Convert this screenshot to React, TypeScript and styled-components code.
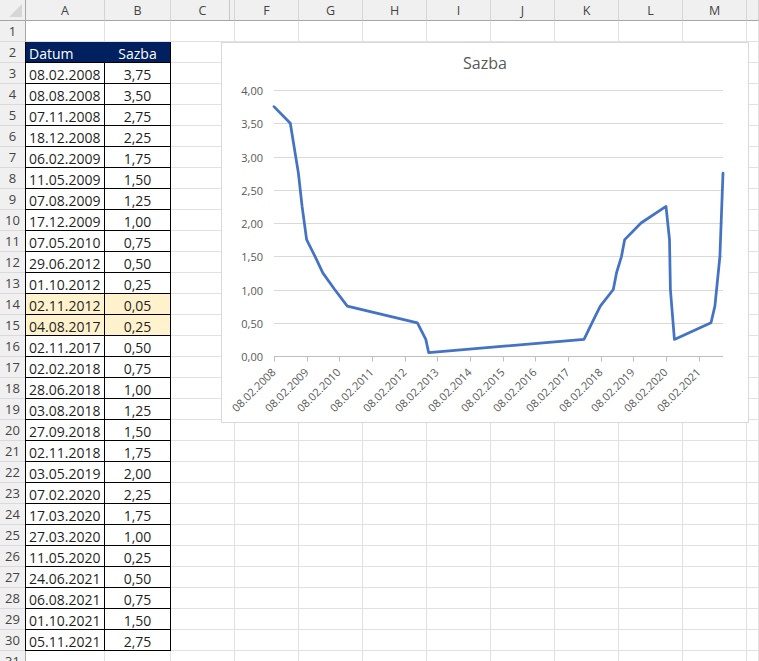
import React from "react";
import styled, { createGlobalStyle } from "styled-components";

const GlobalStyle = createGlobalStyle`
  html, body {
    margin: 0;
    padding: 0;
    background: #ffffff;
  }
  body {
    font-family: "Open Sans", "Liberation Sans", sans-serif;
    height: 661px;
    overflow: hidden;
  }
`;

const data: [string, number][] = [
  ["08.02.2008", 3.75],
  ["08.08.2008", 3.5],
  ["07.11.2008", 2.75],
  ["18.12.2008", 2.25],
  ["06.02.2009", 1.75],
  ["11.05.2009", 1.5],
  ["07.08.2009", 1.25],
  ["17.12.2009", 1.0],
  ["07.05.2010", 0.75],
  ["29.06.2012", 0.5],
  ["01.10.2012", 0.25],
  ["02.11.2012", 0.05],
  ["04.08.2017", 0.25],
  ["02.11.2017", 0.5],
  ["02.02.2018", 0.75],
  ["28.06.2018", 1.0],
  ["03.08.2018", 1.25],
  ["27.09.2018", 1.5],
  ["02.11.2018", 1.75],
  ["03.05.2019", 2.0],
  ["07.02.2020", 2.25],
  ["17.03.2020", 1.75],
  ["27.03.2020", 1.0],
  ["11.05.2020", 0.25],
  ["24.06.2021", 0.5],
  ["06.08.2021", 0.75],
  ["01.10.2021", 1.5],
  ["05.11.2021", 2.75],
];

// rows 14 and 15 are marked in the sheet
const highlighted = ["02.11.2012", "04.08.2017"];

// last column is only a sliver, its letter is off screen
const colLetters = ["A", "B", "C", "F", "G", "H", "I", "J", "K", "L", "M", ""];
const ROW_COUNT = 31;

const fmt = (v: number) => v.toFixed(2).replace(".", ",");

function parseDate(s: string) {
  const [d, m, y] = s.split(".").map(Number);
  return Date.UTC(y, m - 1, d);
}

/* ---------- sheet ---------- */

const Sheet = styled.div`
  position: relative;
  display: grid;
  grid-template-columns: 26px 79px 66px repeat(9, 64px) 1fr;
  grid-auto-rows: 21px;
  width: 100vw;
  height: 661px;
  overflow: hidden;
  color: #222222;
`;

const Corner = styled.div`
  position: relative;
  background: #f0f0f0;
  border-right: 1px solid #a6a6a6;
  border-bottom: 1px solid #a6a6a6;
  box-sizing: border-box;

  &::after {
    content: "";
    position: absolute;
    right: 3px;
    bottom: 3px;
    width: 0;
    height: 0;
    border-left: 13px solid transparent;
    border-bottom: 13px solid #d6d6d6;
  }
`;

const ColHeader = styled.div<{ $hiddenAfter?: boolean }>`
  display: flex;
  align-items: center;
  justify-content: center;
  background: #f0f0f0;
  border-right: 1px solid #d4d4d4;
  border-bottom: 1px solid #a6a6a6;
  box-sizing: border-box;
  font-size: 12.5px;
  color: #444444;
  box-shadow: ${(p) => (p.$hiddenAfter ? "inset -4px 0 0 #f0f0f0, inset -5px 0 0 #c8c8c8" : "none")};
`;

const RowHeader = styled.div`
  display: flex;
  align-items: center;
  justify-content: center;
  background: #f0f0f0;
  border-right: 1px solid #a6a6a6;
  border-bottom: 1px solid #dadada;
  box-sizing: border-box;
  font-size: 13px;
  color: #444444;
`;

type Tone = "plain" | "navy" | "marked";

const Cell = styled.div<{ $tone?: Tone; $boxed?: boolean; $center?: boolean; $first?: boolean }>`
  box-sizing: border-box;
  overflow: hidden;
  white-space: nowrap;
  padding: 0 3px;
  font-size: 14px;
  line-height: 23px;
  text-align: ${(p) => (p.$center ? "center" : "left")};
  background: ${(p) => (p.$tone === "navy" ? "#002060" : p.$tone === "marked" ? "#fff2cc" : "#ffffff")};
  color: ${(p) => (p.$tone === "navy" ? "#ffffff" : "#1f1f1f")};
  border-right: 1px solid
    ${(p) => (p.$boxed ? (p.$tone === "navy" && p.$first ? "#002060" : "#000000") : "#e1e1e1")};
  border-bottom: 1px solid ${(p) => (p.$boxed ? "#000000" : "#e1e1e1")};
  box-shadow: ${(p) => (p.$boxed && p.$first ? "-1px 0 0 #000000" : "none")};
`;

/* ---------- chart ---------- */

const ChartBox = styled.div`
  position: absolute;
  left: 221px;
  top: 42px;
  width: 528px;
  height: 381px;
  box-sizing: border-box;
  display: flex;
  flex-direction: column;
  background: #ffffff;
  border: 1px solid #d9d9d9;
`;

const ChartTitle = styled.div`
  box-sizing: border-box;
  height: 34px;
  padding-top: 10px;
  line-height: 20px;
  text-align: center;
  font-size: 16px;
  color: #595959;
`;

const PlotSvg = styled.svg`
  display: block;
  font-family: "Open Sans", "Liberation Sans", sans-serif;
  font-size: 11px;
`;

const PLOT_W = 526;
const PLOT_H = 345;
const LEFT = 52;
const RIGHT = 501;
const ZERO_Y = 279;
const UNIT = 66.5;

function RateChart() {
  const t0 = parseDate(data[0][0]);
  const t1 = parseDate(data[data.length - 1][0]);
  const xOf = (t: number) => LEFT + ((t - t0) / (t1 - t0)) * (RIGHT - LEFT);
  const yOf = (v: number) => ZERO_Y - v * UNIT;

  const points = data.map(([d, v]) => `${xOf(parseDate(d)).toFixed(1)},${yOf(v).toFixed(1)}`).join(" ");
  const levels = [0, 0.5, 1, 1.5, 2, 2.5, 3, 3.5, 4];
  const years = Array.from({ length: 14 }, (_, i) => 2008 + i);

  return (
    <ChartBox>
      <ChartTitle>Sazba</ChartTitle>
      <PlotSvg width={PLOT_W} height={PLOT_H} viewBox={`0 0 ${PLOT_W} ${PLOT_H}`}>
        {levels.map((v) => {
          const y = Math.round(yOf(v)) + 0.5;
          return (
            <g key={v}>
              <line x1={LEFT} x2={RIGHT} y1={y} y2={y} stroke={v === 0 ? "#bfbfbf" : "#d9d9d9"} strokeWidth={1} />
              <text x={41} y={y + 4} textAnchor="end" fill="#595959">
                {fmt(v)}
              </text>
            </g>
          );
        })}
        {years.map((yr) => {
          const x = Math.round(xOf(Date.UTC(yr, 1, 8))) + 0.5;
          return (
            <g key={yr}>
              <line x1={x} x2={x} y1={ZERO_Y + 0.5} y2={ZERO_Y + 5.5} stroke="#bfbfbf" strokeWidth={1} />
              <text
                x={x + 2}
                y={ZERO_Y + 17}
                textAnchor="end"
                fill="#595959"
                transform={`rotate(-45 ${x + 2} ${ZERO_Y + 17})`}
              >
                {`08.02.${yr}`}
              </text>
            </g>
          );
        })}
        <polyline
          points={points}
          fill="none"
          stroke="#4472c4"
          strokeWidth={2.75}
          strokeLinejoin="round"
          strokeLinecap="round"
        />
      </PlotSvg>
    </ChartBox>
  );
}

export default function App() {
  const body: React.ReactNode[] = [];

  for (let r = 1; r <= ROW_COUNT; r++) {
    body.push(<RowHeader key={`h${r}`}>{r}</RowHeader>);
    const entry = r >= 3 && r - 3 < data.length ? data[r - 3] : null;
    colLetters.forEach((col, ci) => {
      const key = `${ci}-${r}`;
      if (r === 2 && ci < 2) {
        body.push(
          <Cell key={key} $tone="navy" $boxed $first={ci === 0} $center={ci === 1}>
            {ci === 0 ? "Datum" : "Sazba"}
          </Cell>
        );
      } else if (entry && ci < 2) {
        const tone: Tone = highlighted.includes(entry[0]) ? "marked" : "plain";
        body.push(
          <Cell key={key} $tone={tone} $boxed $first={ci === 0} $center={ci === 1}>
            {ci === 0 ? entry[0] : fmt(entry[1])}
          </Cell>
        );
      } else {
        body.push(<Cell key={key} />);
      }
    });
  }

  return (
    <>
      <GlobalStyle />
      <Sheet>
        <Corner />
        {colLetters.map((c, i) => (
          <ColHeader key={i} $hiddenAfter={c === "C"}>
            {c}
          </ColHeader>
        ))}
        {body}
        <RateChart />
      </Sheet>
    </>
  );
}
